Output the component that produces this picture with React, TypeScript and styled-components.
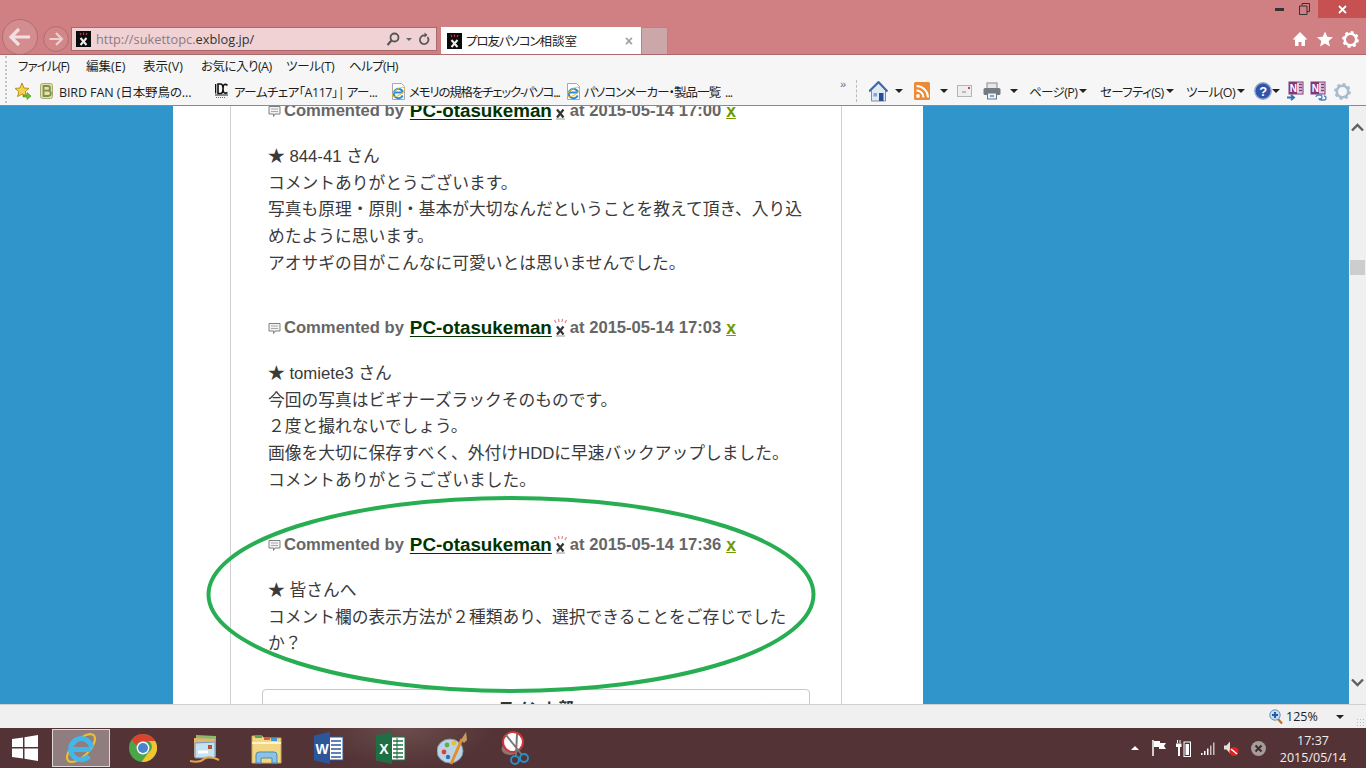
import React from "react";
import styled, { createGlobalStyle } from "styled-components";

const Global = createGlobalStyle`
  html, body { margin: 0; padding: 0; width: 1366px; height: 768px; overflow: hidden; background: #f0f0f0; }
  * { box-sizing: border-box; }
  svg { flex: none; }
`;

const UI = `"Open Sans", "Noto Sans CJK JP", sans-serif`;

const Shell = styled.div`
  width: 1366px;
  height: 768px;
  display: flex;
  flex-direction: column;
  overflow: hidden;
`;

/* ---------- Title bar ---------- */
const TitleBar = styled.header`
  height: 55px;
  flex: none;
  background: #d07f82;
  border-bottom: 1px solid #a86a6d;
  overflow: hidden;
`;
const WindowControls = styled.div`
  height: 19px;
  display: flex;
  justify-content: flex-end;
  align-items: flex-start;
`;
const WinBtn = styled.div<{ $w: number; $bg?: string }>`
  width: ${(p) => p.$w}px;
  height: 18px;
  display: flex;
  align-items: center;
  justify-content: center;
  background: ${(p) => p.$bg || "transparent"};
`;
const NavRow = styled.div`
  height: 36px;
  display: flex;
  align-items: flex-start;
  padding-left: 1px;
`;
const BackBtn = styled.div`
  width: 38px;
  height: 38px;
  flex: none;
`;
const ForwardBtn = styled.div`
  width: 26px;
  height: 26px;
  margin: 7px 0 0 4px;
  flex: none;
`;
const Address = styled.div`
  margin: 8px 0 0 2px;
  width: 366px;
  height: 24px;
  flex: none;
  background: #f0d2d5;
  border: 1px solid #a86a6d;
  display: flex;
  align-items: center;
  padding-left: 4px;
  font: 12.8px "Open Sans", "Liberation Sans", sans-serif;
`;
const Url = styled.span`
  margin-left: 5px;
  color: #8b7b7d;
  flex: 1;
  white-space: nowrap;
  & b {
    font-weight: 400;
    color: #333;
  }
`;
const AddrIcons = styled.div`
  display: flex;
  align-items: center;
  gap: 6px;
  width: 50px;
  flex: none;
`;
const Tab = styled.div`
  margin: 8px 0 0 4px;
  width: 200px;
  height: 28px;
  flex: none;
  background: #fff;
  display: flex;
  align-items: center;
  padding: 0 8px 1px 6px;
  font: 12.5px ${UI};
  font-feature-settings: "palt";
  color: #222;
`;
const TabTitle = styled.span`
  margin-left: 4px;
  flex: 1;
  letter-spacing: -1.1px;
`;
const TabKanji = styled.span`
  letter-spacing: 0;
`;
const TabClose = styled.span`
  color: #a0a0a0;
  font: 700 14px "Liberation Sans", sans-serif;
`;
const NewTab = styled.div`
  margin-top: 8px;
  width: 27px;
  height: 27px;
  flex: none;
  background: #cba7a9;
  border: 1px solid #b48486;
  border-bottom: none;
`;
const FrameTools = styled.div`
  margin-left: auto;
  margin-top: 12px;
  display: flex;
  gap: 9px;
  padding-right: 7px;
`;

/* ---------- Menu + favourites ---------- */
const BarArea = styled.div`
  flex: none;
  background: #f6f6f6;
  height: 51px;
  border-bottom: 1px solid #8a8a8a;
  position: relative;
  font: 12.5px ${UI};
  font-feature-settings: "palt";
  color: #1e1e1e;
`;
const Grip = styled.div`
  position: absolute;
  left: 5px;
  top: 1px;
  bottom: 2px;
  border-left: 2px dotted #c4c4c4;
`;
const MenuBar = styled.nav`
  height: 24px;
  display: flex;
  align-items: center;
  padding: 0 0 3px 18px;
`;
const MenuItem = styled.span<{ $w: number; $ls: number }>`
  width: ${(p) => p.$w}px;
  white-space: nowrap;
  letter-spacing: ${(p) => p.$ls}px;
`;
const FavBar = styled.div`
  height: 26px;
  display: flex;
  align-items: center;
  padding: 0 0 2px 14px;
`;
const FavStar = styled.div`
  width: 26px;
  flex: none;
  display: flex;
`;
const FavItem = styled.div<{ $w?: number }>`
  width: ${(p) => p.$w || 175}px;
  flex: none;
  display: flex;
  align-items: center;
  white-space: nowrap;
`;
const FavIcon = styled.div`
  width: 19px;
  flex: none;
  display: flex;
`;
const FavLabel = styled.span<{ $ls: number }>`
  letter-spacing: ${(p) => p.$ls}px;
`;
const Chevrons = styled.span`
  width: 15px;
  margin-left: 3px;
  flex: none;
  color: #5c6c9c;
  font: 11px "Liberation Sans", sans-serif;
  position: relative;
  top: -7px;
`;
const ToolSep = styled.div`
  width: 0;
  height: 22px;
  margin-left: 1px;
  border-left: 1px dashed #bbb;
  flex: none;
`;
const Tools = styled.div`
  display: flex;
  align-items: center;
  margin-left: 12px;
`;
const ToolCell = styled.div<{ $ml: number; $w: number }>`
  margin-left: ${(p) => p.$ml}px;
  width: ${(p) => p.$w}px;
  flex: none;
  display: flex;
  align-items: center;
  white-space: nowrap;
  letter-spacing: -0.6px;
`;
const Caret = styled.div<{ $c?: string }>`
  width: 0;
  height: 0;
  border-left: 4px solid transparent;
  border-right: 4px solid transparent;
  border-top: 4px solid ${(p) => p.$c || "#222"};
  flex: none;
`;
const SmallCaret = styled(Caret)`
  border-width: 3px 3px 0;
`;
const UpCaret = styled.div`
  width: 0;
  height: 0;
  border-left: 4px solid transparent;
  border-right: 4px solid transparent;
  border-bottom: 4px solid #fff;
`;

/* ---------- Page viewport ---------- */
const Viewport = styled.main`
  flex: 1;
  min-height: 0;
  display: flex;
  position: relative;
  overflow: hidden;
`;
const PageBg = styled.div`
  flex: 1;
  background: #3095cb;
  padding-left: 173px;
  overflow: hidden;
`;
const WhiteColumn = styled.div`
  width: 750px;
  height: 100%;
  background: #fff;
  padding-left: 57px;
`;
const Inner = styled.div`
  width: 612px;
  height: 100%;
  border-left: 1px solid #d0d0d0;
  border-right: 1px solid #d0d0d0;
  padding: 0 30px 0 37px;
  overflow: hidden;
`;
const CommentList = styled.div`
  margin-top: -7px;
`;
const Comment = styled.article<{ $after: number }>`
  margin-bottom: ${(p) => p.$after}px;
`;
const CommentHead = styled.div`
  height: 24px;
  display: flex;
  align-items: center;
  white-space: nowrap;
  font: 700 16.6px "Liberation Sans", sans-serif;
  color: #666;
`;
const Bubble = styled.span`
  display: inline-flex;
  width: 16px;
  flex: none;
`;
const Author = styled.a`
  margin-left: 6px;
  font-size: 18.8px;
  color: #003300;
  text-decoration: underline;
  text-underline-offset: 2px;
`;
const Crown = styled.span`
  display: inline-flex;
  width: 15px;
  margin: 0 2px 0 1px;
  flex: none;
`;
const Del = styled.a`
  margin-left: 5px;
  font-size: 17.5px;
  color: #6f9a00;
  text-decoration: underline;
`;
const CommentBody = styled.div`
  margin-top: 21px;
  font: 16.75px/26.7px "Liberation Sans", "Noto Sans CJK JP", sans-serif;
  color: #3a3a3a;
  white-space: nowrap;
`;
const FormBox = styled.div`
  margin-left: -6px;
  width: 548px;
  height: 60px;
  border: 1px solid #c8c8c8;
  border-radius: 4px 4px 0 0;
  padding-top: 5px;
  text-align: center;
  font: 700 15px/24px "Noto Sans CJK JP", sans-serif;
  color: #333;
  background: linear-gradient(#fff, #f8f8f8);
`;
const Scrollbar = styled.div`
  width: 17px;
  flex: none;
  background: #f0f0f0;
  position: relative;
  display: flex;
  flex-direction: column;
  justify-content: space-between;
  align-items: center;
  padding: 17px 0 17px;
`;
const Thumb = styled.div`
  position: absolute;
  left: 1px;
  top: 154px;
  width: 15px;
  height: 15px;
  background: #cdcdcd;
`;
const Ring = styled.svg`
  position: absolute;
  left: 0;
  top: 0;
  pointer-events: none;
`;

/* ---------- Status ---------- */
const Status = styled.footer`
  height: 24px;
  flex: none;
  background: #f0f0f0;
  border-top: 1px solid #cfcfcf;
  display: flex;
  justify-content: flex-end;
  align-items: center;
  font: 12.5px "Open Sans", "Liberation Sans", sans-serif;
  color: #222;
  padding-right: 2px;
`;
const ZoomLabel = styled.span`
  margin-left: 2px;
  width: 50px;
`;
const ResizeGrip = styled.div`
  width: 8px;
  height: 8px;
  margin: 10px 0 0 12px;
  background-image: radial-gradient(#bbb 1px, transparent 1px);
  background-size: 3px 3px;
`;

/* ---------- Taskbar ---------- */
const Taskbar = styled.div`
  height: 40px;
  flex: none;
  display: flex;
  align-items: center;
  color: #fff;
  background: radial-gradient(ellipse 90px 40px at 405px 0, #6b4d4d, rgba(107, 77, 77, 0) 100%), #533335;
`;
const StartBtn = styled.div`
  width: 52px;
  flex: none;
  padding-left: 12px;
  display: flex;
`;
const TaskIcon = styled.div<{ $active?: boolean; $ml?: number }>`
  width: ${(p) => (p.$active ? 58 : 62)}px;
  height: 38px;
  flex: none;
  display: flex;
  align-items: center;
  justify-content: center;
  margin-left: ${(p) => p.$ml || 0}px;
  border: ${(p) => (p.$active ? "1px solid #e0d8d8" : "none")};
  background: ${(p) => (p.$active ? "#8f7d7f" : "transparent")};
`;
const Tray = styled.div`
  margin-left: auto;
  display: flex;
  align-items: center;
  padding-right: 19px;
`;
const TrayCell = styled.div<{ $w: number }>`
  width: ${(p) => p.$w}px;
  flex: none;
  display: flex;
  justify-content: center;
`;
const Clock = styled.div`
  width: 68px;
  margin-left: 6px;
  padding-top: 2px;
  text-align: center;
  font: 12.5px/17px "Open Sans", "Liberation Sans", sans-serif;
  color: #f4eeee;
`;

/* ---------- Drawings ---------- */
const Favicon = () => (
  <svg width="15" height="16" viewBox="0 0 15 16">
    <rect width="15" height="16" fill="#0b0b0b" />
    <path d="M4 2l1 2M7.500 1.500v2.500M11 2l-1 2" stroke="#c9364a" strokeWidth="1.200" />
    <path d="M4.500 7l6 7M10.500 7l-6 7" stroke="#eee" strokeWidth="2" />
  </svg>
);
const BackIcon = () => (
  <svg width="38" height="38" viewBox="0 0 38 38">
    <circle cx="19" cy="18" r="17.500" fill="#d48d8f" stroke="#b06e71" />
    <path d="M10 18h19M18 10l-8 8 8 8" fill="none" stroke="#f3dfe0" strokeWidth="3.200" />
  </svg>
);
const ForwardIcon = () => (
  <svg width="26" height="26" viewBox="0 0 26 26">
    <circle cx="13" cy="13" r="12.400" fill="#d28688" stroke="#b06e71" />
    <path d="M6.500 13h12M13 7l6 6-6 6" fill="none" stroke="#eccfd0" strokeWidth="2.200" />
  </svg>
);
const SearchIco = () => (
  <svg width="14" height="15" viewBox="0 0 14 15">
    <circle cx="8.500" cy="5.500" r="4" fill="none" stroke="#555" strokeWidth="1.800" />
    <path d="M5.500 8.500L1.500 13" stroke="#555" strokeWidth="2.200" />
  </svg>
);
const RefreshIco = () => (
  <svg width="12" height="14" viewBox="0 0 12 14">
    <path d="M9.500 5a4.300 4.300 0 1 1-2.500-1.500" fill="none" stroke="#555" strokeWidth="1.700" />
    <path d="M6.500 0.500v5l3-2.500z" fill="#555" />
  </svg>
);
const HomeWhite = () => (
  <svg width="16" height="16" viewBox="0 0 16 16">
    <path d="M8 1L0.500 8.500H3V15h3.500v-4h3v4H13V8.500h2.500z" fill="#fff" />
  </svg>
);
const StarWhite = () => (
  <svg width="16" height="16" viewBox="0 0 16 16">
    <path d="M8 0.500l2.300 5.200 5.700.5-4.300 3.700 1.300 5.600L8 12.600l-5 2.900 1.300-5.600L0 6.200l5.700-.5z" fill="#fff" />
  </svg>
);
const GearShape = ({ size, fill, hole }: { size: number; fill: string; hole: string }) => (
  <svg width={size} height={size} viewBox="0 0 16 16">
    <circle cx="8" cy="8" r="5.400" fill="none" stroke={fill} strokeWidth="2.400" />
    <circle cx="8" cy="8" r="6.600" fill="none" stroke={fill} strokeWidth="2.600" strokeDasharray="2.600 2.580" />
    <circle cx="8" cy="8" r="3" fill={hole} />
  </svg>
);
const StarFav = () => (
  <svg width="18" height="18" viewBox="0 0 18 18">
    <path d="M8 1l2 5 5 .4-3.800 3.200 1.200 5L8 12l-4.400 2.600 1.200-5L1 6.400 6 6z" fill="#f4d24e" stroke="#b98f1e" />
    <path d="M9 13h4v-2.500l4 3.500-4 3.500V15H9z" fill="#6cc02c" stroke="#3f8a15" strokeWidth=".6" />
  </svg>
);
const BirdB = () => (
  <svg width="13" height="16" viewBox="0 0 13 16">
    <rect x=".5" y=".5" width="12" height="15" rx="2" fill="#e5e2a6" stroke="#a9ab72" />
    <path d="M3.500 3h4.200a2.200 2.200 0 0 1 0 4.700H3.500h4.700a2.500 2.500 0 0 1 0 5.300H3.500z" fill="none" stroke="#7c8f54" strokeWidth="1.800" />
  </svg>
);
const IdcLogo = () => (
  <svg width="13" height="16" viewBox="0 0 13 16">
    <path d="M.5 1v9.500M3 1h2.500a2.500 4.700 0 0 1 0 9.500H3zM12.500 2.200Q8 -.5 8 5.700T12.500 9.500" fill="none" stroke="#111" strokeWidth="1.600" />
    <path d="M0 12h13" stroke="#222" strokeWidth="1" />
    <path d="M1 14.500h10" stroke="#666" strokeWidth="1.200" strokeDasharray="1 1" />
  </svg>
);
const IeDoc = () => (
  <svg width="17" height="17" viewBox="0 0 17 17">
    <path d="M2.500 .5h9l3 3v13h-12z" fill="#fff" stroke="#a8a8a8" />
    <path d="M4 9.500h9M12.700 12.500a4.700 4.700 0 1 1 .3-3" fill="none" stroke="#2a8cd8" strokeWidth="2" />
    <ellipse cx="8.500" cy="9" rx="7" ry="3" transform="rotate(-35 8.500 9)" fill="none" stroke="#e8b92e" strokeWidth="1" />
  </svg>
);
const HomeIco = () => (
  <svg width="19" height="21" viewBox="0 0 19 21">
    <path d="M2.500 9v11h14V9L9.500 2z" fill="#dfe9f2" stroke="#7c8ea6" />
    <path d="M0 10.500L9.500 1l9 9.500" fill="none" stroke="#3f68ac" strokeWidth="2" />
    <rect x="10" y="12" width="4.500" height="8" fill="#274c92" />
    <rect x="4.500" y="12" width="3.500" height="3.500" fill="#7fa6d8" />
  </svg>
);
const RssIco = () => (
  <svg width="16" height="18" viewBox="0 0 16 18">
    <rect width="16" height="18" rx="1.500" fill="#ee8a36" />
    <circle cx="4" cy="14" r="1.900" fill="#fff" />
    <path d="M2.500 8.500a7 7 0 0 1 7 7M2.500 4a11.500 11.500 0 0 1 11.500 11.500" fill="none" stroke="#fff" strokeWidth="2" />
  </svg>
);
const MailIco = () => (
  <svg width="15" height="12" viewBox="0 0 15 12">
    <rect x=".5" y=".5" width="14" height="11" fill="#eee" stroke="#b5b5b5" />
    <rect x="11" y="2" width="2" height="2" fill="#c8484a" />
    <path d="M5 7h4" stroke="#888" />
  </svg>
);
const PrintIco = () => (
  <svg width="18" height="18" viewBox="0 0 18 18">
    <rect x="4" y="1" width="10" height="6" fill="#e7e7e7" stroke="#8b8b8b" />
    <rect x=".5" y="6" width="17" height="7" rx="1.500" fill="#737b84" />
    <rect x="4.500" y="11" width="9" height="6" fill="#eef2f5" stroke="#6e7780" />
    <path d="M7 14h4" stroke="#5d8dc0" strokeWidth="1.500" />
  </svg>
);
const HelpIco = () => (
  <svg width="18" height="18" viewBox="0 0 18 18">
    <circle cx="9" cy="9" r="8.200" fill="#2f55ad" stroke="#9aa8c8" strokeWidth="1.400" />
    <text x="9" y="13.500" textAnchor="middle" fontFamily="Liberation Sans" fontWeight="700" fontSize="13" fill="#fff">?</text>
  </svg>
);
const NoteIco = ({ link }: { link?: boolean }) => (
  <svg width="20" height="20" viewBox="0 0 20 20">
    <rect x="3" y="1" width="14" height="12" fill="#e3cfe3" stroke="#80397b" />
    <rect x="3" y="1" width="8" height="12" fill="#80397b" />
    <text x="7" y="11" textAnchor="middle" fontFamily="Liberation Sans" fontWeight="700" fontSize="10" fill="#fff">N</text>
    <path d="M13 3.500h3M13 6.500h3M13 9.500h3" stroke="#80397b" strokeWidth="1.300" />
    {link ? (
      <path d="M8 16a2.200 2.200 0 0 1 2-2h2a2 2 0 0 1 0 4M16 15a2 2 0 0 1 0 4h-3a2 2 0 0 1-2-2" fill="none" stroke="#4f82bd" strokeWidth="1.300" />
    ) : (
      <path d="M1 16.500h6M5 14l3 2.500-3 2.500" fill="none" stroke="#2e75b6" strokeWidth="1.800" />
    )}
  </svg>
);
const ChatIco = () => (
  <svg width="13" height="13" viewBox="0 0 13 13">
    <path d="M1 1.500h11v7.500H7l-1.500 2.500V9H1z" fill="#f2f2f2" stroke="#808080" />
    <path d="M3 4h7M3 6.500h7" stroke="#aaa" />
  </svg>
);
const CrownX = () => (
  <svg width="15" height="21" viewBox="0 0 15 21">
    <path d="M3 5L1.500 2M6 4L5.500 .8M9 4L9.500 .8M12 5l1.500-3" stroke="#e78a97" strokeWidth="1.300" />
    <path d="M4 8.500l6.500 8M10.500 8.500l-6.500 8" stroke="#333" strokeWidth="2.200" />
    <path d="M3 18h9" stroke="#999" />
  </svg>
);
const Chevron = ({ down }: { down?: boolean }) => (
  <svg width="13" height="9" viewBox="0 0 13 9">
    <path d={down ? "M1 1.500l5.500 5.500 5.500-5.500" : "M1 7.500L6.500 2 12 7.500"} fill="none" stroke="#606060" strokeWidth="2.400" />
  </svg>
);
const ZoomIco = () => (
  <svg width="15" height="16" viewBox="0 0 15 16">
    <path d="M8.500 9.500l4.500 5" stroke="#b5732e" strokeWidth="2.200" />
    <circle cx="6" cy="6" r="5.200" fill="#c9ddf2" stroke="#6d8fb8" />
    <path d="M3 6h6M6 3v6" stroke="#1e5cae" strokeWidth="2" />
  </svg>
);
const WinLogo = () => (
  <svg width="26" height="26" viewBox="0 0 26 26">
    <path d="M0 4l11-1.600V12H0zM12.500 2.200L26 0v12H12.500zM0 13.500h11v9.900L0 22zM12.500 13.500H26V26l-13.500-2.200z" fill="#fff" />
  </svg>
);
const IeBig = () => (
  <svg width="32" height="34" viewBox="0 0 32 34">
    <ellipse cx="16" cy="17" rx="18" ry="8" transform="rotate(-45 16 17)" fill="none" stroke="#e9bf2f" strokeWidth="2.200" />
    <path d="M7 18.500h19M24 25a10.500 10.500 0 1 1 2.500-8" fill="none" stroke="#45b6e8" strokeWidth="5" />
  </svg>
);
const ChromeIco = () => (
  <svg width="28" height="28" viewBox="0 0 28 28">
    <circle cx="14" cy="14" r="14" fill="#4aa648" />
    <path d="M14 0a14 14 0 0 1 12.100 7H14a7 7 0 0 0-6.500 4.400L2.600 5.800A14 14 0 0 1 14 0z" fill="#d9432f" />
    <path d="M26.100 7A14 14 0 0 1 12.600 27.900l6.400-9a7 7 0 0 0 1-11.900z" fill="#f3c62f" />
    <circle cx="14" cy="14" r="6.400" fill="#fff" />
    <circle cx="14" cy="14" r="5" fill="#4b83d0" />
  </svg>
);
const MailApp = () => (
  <svg width="32" height="32" viewBox="0 0 32 32">
    <path d="M7 3l20 1v20l-20-1z" fill="#8eb86e" />
    <path d="M5 6l21 1v19l-21-1z" fill="#e9b36a" />
    <path d="M6 11l20-1v16H6z" fill="#c5e2f5" stroke="#6e9bc2" />
    <rect x="19" y="13" width="4" height="4" fill="#b5532a" />
    <path d="M9 20h10" stroke="#fff" strokeWidth="3" />
    <path d="M1 29q10 2 14-2t15 1" fill="none" stroke="#e5a143" strokeWidth="2" />
  </svg>
);
const FolderApp = () => (
  <svg width="32" height="32" viewBox="0 0 32 32">
    <path d="M1 4h10l2 2h17v25H1z" fill="#f2d684" stroke="#c9a95a" />
    <rect x="4" y="3" width="7" height="3" fill="#53a653" />
    <rect x="13" y="5" width="6" height="3" fill="#cf5a48" />
    <rect x="20" y="6" width="6" height="3" fill="#3f9ad4" />
    <path d="M1 11h29" stroke="#fff4c8" strokeWidth="2" />
    <path d="M5 31V23a3 3 0 0 1 3-3h15a3 3 0 0 1 3 3v8h-5v-5H10v5z" fill="#8ac3e3" stroke="#4d8cb9" />
  </svg>
);
const OfficeIco = ({ dark, light, letter, grid }: { dark: string; light: string; letter: string; grid?: boolean }) => (
  <svg width="30" height="32" viewBox="0 0 30 32">
    <rect x="13" y="5" width="16" height="23" fill="#fff" stroke={light} />
    {[9, 13, 17, 21, 25].map((y) => (
      <path key={y} d={`M17 ${y}h10`} stroke={light} strokeWidth="1.500" />
    ))}
    {grid && <path d="M21 6v21" stroke={light} />}
    <path d="M0 3.500L16 0v32L0 28.500z" fill={dark} />
    <text x="8" y="21.500" textAnchor="middle" fontFamily="Liberation Sans" fontWeight="700" fontSize="14" fill="#fff">{letter}</text>
  </svg>
);
const PaintIco = () => (
  <svg width="32" height="34" viewBox="0 0 32 34">
    <ellipse cx="13" cy="20" rx="13" ry="12" fill="#bcd3e4" stroke="#7c98ad" />
    <circle cx="7" cy="21" r="2.400" fill="#d9433b" />
    <circle cx="10" cy="14" r="2.400" fill="#6aa84f" />
    <circle cx="17" cy="12" r="2.400" fill="#e6c02d" />
    <circle cx="11" cy="26" r="2.200" fill="#2f6fb8" />
    <path d="M14 33L25 8" stroke="#e48e2a" strokeWidth="3" />
    <path d="M24 9l5-8 1 8-3 3z" fill="#c79a63" />
  </svg>
);
const ScissorIco = () => (
  <svg width="30" height="34" viewBox="0 0 30 34">
    <ellipse cx="10" cy="18" rx="8.500" ry="6" fill="#8e7474" />
    <circle cx="13" cy="11" r="10" fill="#fff" stroke="#c8383a" strokeWidth="2" />
    <path d="M6 4l16 20M17 3L16 24" stroke="#777" strokeWidth="2" />
    <circle cx="24" cy="27" r="4" fill="none" stroke="#2b8fc7" strokeWidth="2" />
    <circle cx="15" cy="29" r="4" fill="none" stroke="#2b8fc7" strokeWidth="2" />
  </svg>
);
const FlagIco = () => (
  <svg width="14" height="16" viewBox="0 0 14 16">
    <path d="M1 0v16" stroke="#fff" strokeWidth="1.500" />
    <path d="M2 1h6v2h6l-2 3 2 3H7V7H2z" fill="#fff" />
  </svg>
);
const PowerIco = () => (
  <svg width="15" height="17" viewBox="0 0 15 17">
    <path d="M1.500 0v3M4 0v3" stroke="#fff" />
    <path d="M0 3.500h5.500V7H4v9H2V7H0z" fill="#fff" />
    <rect x="8" y="2" width="6.500" height="14.500" fill="none" stroke="#fff" />
    <rect x="9.500" y="4" width="3.500" height="11" fill="#fff" />
  </svg>
);
const SignalIco = () => (
  <svg width="15" height="13" viewBox="0 0 15 13">
    <path d="M1 11h1.500v2H1zM4 9h1.500v4H4zM7 6.500h1.500V13H7z" fill="#fff" />
    <path d="M10 3.500h1.500V13H10zM13 .5h1.500V13H13z" fill="#c8bcbc" />
  </svg>
);
const SpeakerIco = () => (
  <svg width="15" height="17" viewBox="0 0 15 17">
    <path d="M0 5.500h2.500L6 1.500v12l-3.500-4H0z" fill="#e4dede" />
    <circle cx="10" cy="11.500" r="4.600" fill="#e02020" />
    <path d="M7 9l6 5" stroke="#fff" strokeWidth="1.600" />
  </svg>
);
const TrayX = () => (
  <svg width="15" height="15" viewBox="0 0 15 15">
    <circle cx="7.500" cy="7.500" r="7.500" fill="#a69a9a" />
    <path d="M4.500 4.500l6 6M10.500 4.500l-6 6" stroke="#3d2c2c" strokeWidth="2" />
  </svg>
);

const menu: [string, number, number][] = [
  ["ファイル(F)", 68, -0.9],
  ["編集(E)", 57, 0],
  ["表示(V)", 58, 0],
  ["お気に入り(A)", 85, -0.5],
  ["ツール(T)", 63, -0.2],
  ["ヘルプ(H)", 60, -0.6],
];

type Cmt = { time: string; lines: string[]; after: number };
const comments: Cmt[] = [
  {
    time: "17:00",
    after: 38.5,
    lines: [
      "★ 844-41 さん",
      "コメントありがとうございます。",
      "写真も原理・原則・基本が大切なんだということを教えて頂き、入り込",
      "めたように思います。",
      "アオサギの目がこんなに可愛いとは思いませんでした。",
    ],
  },
  {
    time: "17:03",
    after: 38.5,
    lines: [
      "★ tomiete3 さん",
      "今回の写真はビギナーズラックそのものです。",
      "２度と撮れないでしょう。",
      "画像を大切に保存すべく、外付けHDDに早速バックアップしました。",
      "コメントありがとうございました。",
    ],
  },
  {
    time: "17:36",
    after: 31,
    lines: [
      "★ 皆さんへ",
      "コメント欄の表示方法が２種類あり、選択できることをご存じでした",
      "か？",
    ],
  },
];

export default function App() {
  return (
    <Shell>
      <Global />
      <TitleBar>
        <WindowControls>
          <WinBtn $w={22}>
            <svg width="9" height="3" viewBox="0 0 9 3"><rect width="9" height="3" fill="#333" /></svg>
          </WinBtn>
          <WinBtn $w={28}>
            <svg width="11" height="12" viewBox="0 0 11 12"><path d="M3 2.500V.5h7.500v8H8M.5 3h7.500v8.500H.5z" fill="none" stroke="#333" /></svg>
          </WinBtn>
          <WinBtn $w={48} $bg="#c75050">
            <svg width="9" height="9" viewBox="0 0 9 9"><path d="M1 1l7 7M8 1L1 8" stroke="#fff" strokeWidth="1.800" /></svg>
          </WinBtn>
        </WindowControls>
        <NavRow>
          <BackBtn><BackIcon /></BackBtn>
          <ForwardBtn><ForwardIcon /></ForwardBtn>
          <Address>
            <Favicon />
            <Url>http://sukettopc.<b>exblog.jp/</b></Url>
            <AddrIcons>
              <SearchIco />
              <SmallCaret $c="#666" />
              <RefreshIco />
            </AddrIcons>
          </Address>
          <Tab>
            <Favicon />
            <TabTitle>プロ友パソコン<TabKanji>相談室</TabKanji></TabTitle>
            <TabClose>×</TabClose>
          </Tab>
          <NewTab />
          <FrameTools>
            <HomeWhite />
            <StarWhite />
            <GearShape size={17} fill="#fff" hole="#d07f82" />
          </FrameTools>
        </NavRow>
      </TitleBar>

      <BarArea>
        <Grip />
        <MenuBar>
          {menu.map(([t, w, ls]) => (
            <MenuItem key={t} $w={w} $ls={ls}>{t}</MenuItem>
          ))}
        </MenuBar>
        <FavBar>
          <FavStar><StarFav /></FavStar>
          <FavItem><FavIcon><BirdB /></FavIcon><FavLabel $ls={-0.1}>BIRD FAN (日本野鳥の...</FavLabel></FavItem>
          <FavItem><FavIcon><IdcLogo /></FavIcon><FavLabel $ls={-0.5}>アームチェア「A117」| アー...</FavLabel></FavItem>
          <FavItem><FavIcon><IeDoc /></FavIcon><FavLabel $ls={-1.2}>メモリの規格をチェック-パソコ...</FavLabel></FavItem>
          <FavItem $w={272}><FavIcon><IeDoc /></FavIcon><FavLabel $ls={-0.9}>パソコンメーカー・製品一覧&nbsp;&nbsp;...</FavLabel></FavItem>
          <Chevrons>»</Chevrons>
          <ToolSep />
          <Tools>
            <ToolCell $ml={0} $w={19}><HomeIco /></ToolCell>
            <ToolCell $ml={7} $w={8}><Caret /></ToolCell>
            <ToolCell $ml={11} $w={16}><RssIco /></ToolCell>
            <ToolCell $ml={10} $w={8}><Caret /></ToolCell>
            <ToolCell $ml={9} $w={15}><MailIco /></ToolCell>
            <ToolCell $ml={11} $w={18}><PrintIco /></ToolCell>
            <ToolCell $ml={9} $w={8}><Caret /></ToolCell>
            <ToolCell $ml={11} $w={50}>ページ(P)</ToolCell>
            <ToolCell $ml={0} $w={8}><Caret /></ToolCell>
            <ToolCell $ml={13} $w={66}>セーフティ(S)</ToolCell>
            <ToolCell $ml={0} $w={8}><Caret /></ToolCell>
            <ToolCell $ml={12} $w={51}>ツール(O)</ToolCell>
            <ToolCell $ml={0} $w={8}><Caret /></ToolCell>
            <ToolCell $ml={9} $w={18}><HelpIco /></ToolCell>
            <ToolCell $ml={0} $w={8}><Caret /></ToolCell>
            <ToolCell $ml={6} $w={20}><NoteIco /></ToolCell>
            <ToolCell $ml={2} $w={20}><NoteIco link /></ToolCell>
            <ToolCell $ml={6} $w={17}><GearShape size={17} fill="#a9bccd" hole="#f6f6f6" /></ToolCell>
          </Tools>
        </FavBar>
      </BarArea>

      <Viewport>
        <PageBg>
          <WhiteColumn>
            <Inner>
              <CommentList>
                {comments.map((c) => (
                  <Comment key={c.time} $after={c.after}>
                    <CommentHead>
                      <Bubble><ChatIco /></Bubble>
                      Commented by
                      <Author>PC-otasukeman</Author>
                      <Crown><CrownX /></Crown>
                      at 2015-05-14 {c.time}
                      <Del>x</Del>
                    </CommentHead>
                    <CommentBody>
                      {c.lines.map((l) => (
                        <div key={l}>{l}</div>
                      ))}
                    </CommentBody>
                  </Comment>
                ))}
                <FormBox>コメント部</FormBox>
              </CommentList>
            </Inner>
          </WhiteColumn>
        </PageBg>
        <Scrollbar>
          <Chevron />
          <Thumb />
          <Chevron down />
        </Scrollbar>
        <Ring width="1366" height="598" viewBox="0 0 1366 598">
          <ellipse cx="511" cy="488.500" rx="302.500" ry="96.500" fill="none" stroke="#27ad52" strokeWidth="4" />
        </Ring>
      </Viewport>

      <Status>
        <ZoomIco />
        <ZoomLabel>125%</ZoomLabel>
        <Caret />
        <ResizeGrip />
      </Status>

      <Taskbar>
        <StartBtn><WinLogo /></StartBtn>
        <TaskIcon $active><IeBig /></TaskIcon>
        <TaskIcon $ml={2}><ChromeIco /></TaskIcon>
        <TaskIcon><MailApp /></TaskIcon>
        <TaskIcon><FolderApp /></TaskIcon>
        <TaskIcon><OfficeIco dark="#2b579a" light="#2b579a" letter="W" /></TaskIcon>
        <TaskIcon><OfficeIco dark="#1e6f43" light="#1e6f43" letter="X" grid /></TaskIcon>
        <TaskIcon><PaintIco /></TaskIcon>
        <TaskIcon><ScissorIco /></TaskIcon>
        <Tray>
          <TrayCell $w={24}><UpCaret /></TrayCell>
          <TrayCell $w={24}><FlagIco /></TrayCell>
          <TrayCell $w={24}><PowerIco /></TrayCell>
          <TrayCell $w={24}><SignalIco /></TrayCell>
          <TrayCell $w={24}><SpeakerIco /></TrayCell>
          <TrayCell $w={30}><TrayX /></TrayCell>
          <Clock>17:37<br />2015/05/14</Clock>
        </Tray>
      </Taskbar>
    </Shell>
  );
}
